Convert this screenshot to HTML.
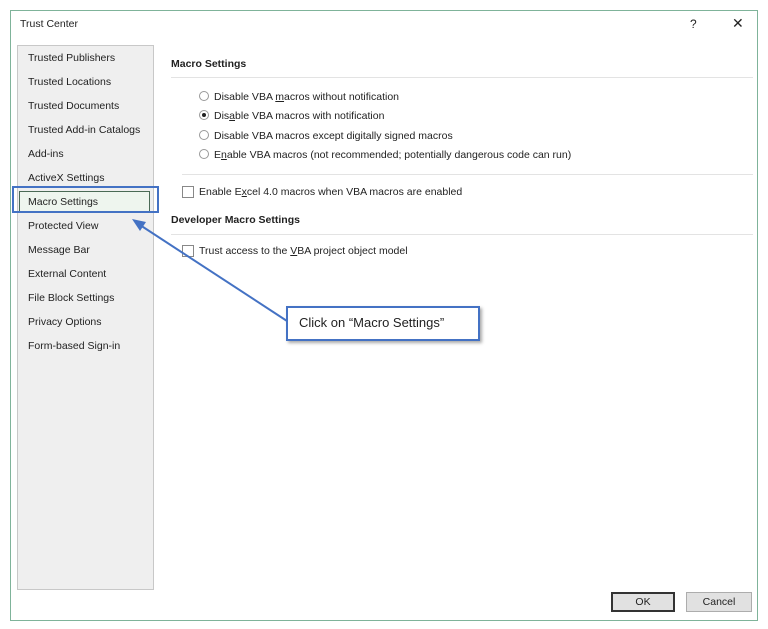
<!DOCTYPE html>
<html><head><style>
body{margin:0;width:768px;height:629px;background:#fff;font-family:"Liberation Sans",sans-serif;font-size:10.5px;color:#222;position:relative;overflow:hidden}
.a{position:absolute;white-space:nowrap}
.side{position:absolute;left:17px;top:45px;width:135px;height:543px;background:#efefef;border:1px solid #c8c8c8}
.it{position:absolute;left:10px}
.rad{position:absolute;width:8px;height:8px;border:1px solid #999;border-radius:50%;background:#fff}
.chk{position:absolute;width:10px;height:10px;border:1px solid #888;background:#fff}
.btn{position:absolute;height:18px;border:1px solid #adadad;background:#e1e1e1;text-align:center;line-height:18px}
.h{font-weight:bold}
.ln{position:absolute;height:1px;background:#e3e3e3}
</style></head><body>
<div style="position:absolute;left:10px;top:10px;width:746px;height:609px;border:1px solid #7fb39a"></div>
<div class="a" style="left:20px;top:18px">Trust Center</div>
<div class="a" style="left:690px;top:17px;font-size:12px">?</div>
<div class="a" style="left:732px;top:15px;font-size:14px">✕</div>
<div class="side">
<div class="it a" style="top:6px">Trusted Publishers</div>
<div class="it a" style="top:30px">Trusted Locations</div>
<div class="it a" style="top:54px">Trusted Documents</div>
<div class="it a" style="top:78px">Trusted Add-in Catalogs</div>
<div class="it a" style="top:102px">Add-ins</div>
<div class="it a" style="top:126px">ActiveX Settings</div>
<div class="a" style="left:1px;top:145px;width:129px;height:20px;background:#eef5ee;border:1px solid #4a6a55"></div>
<div class="it a" style="top:150px">Macro Settings</div>
<div class="it a" style="top:174px">Protected View</div>
<div class="it a" style="top:198px">Message Bar</div>
<div class="it a" style="top:222px">External Content</div>
<div class="it a" style="top:246px">File Block Settings</div>
<div class="it a" style="top:270px">Privacy Options</div>
<div class="it a" style="top:294px">Form-based Sign-in</div>
</div>
<div style="position:absolute;left:12px;top:186px;width:147px;height:27px;border:2px solid #4472c4;box-sizing:border-box"></div>
<div class="a h" style="left:171px;top:58px">Macro Settings</div>
<div class="ln" style="left:171px;top:77px;width:582px"></div>
<div class="rad" style="left:199px;top:91px"></div><div class="a" style="left:214px;top:91px">Disable VBA <u>m</u>acros without notification</div>
<div class="rad" style="left:199px;top:110px"><div style="position:absolute;left:2px;top:2px;width:4px;height:4px;border-radius:50%;background:#222"></div></div><div class="a" style="left:214px;top:110px">Dis<u>a</u>ble VBA macros with notification</div>
<div class="rad" style="left:199px;top:130px"></div><div class="a" style="left:214px;top:130px">Disable VBA macros except digitally signed macros</div>
<div class="rad" style="left:199px;top:149px"></div><div class="a" style="left:214px;top:149px">E<u>n</u>able VBA macros (not recommended; potentially dangerous code can run)</div>
<div class="ln" style="left:182px;top:174px;width:571px"></div>
<div class="chk" style="left:182px;top:186px"></div><div class="a" style="left:199px;top:186px">Enable E<u>x</u>cel 4.0 macros when VBA macros are enabled</div>
<div class="a h" style="left:171px;top:214px">Developer Macro Settings</div>
<div class="ln" style="left:171px;top:234px;width:582px"></div>
<div class="chk" style="left:182px;top:245px"></div><div class="a" style="left:199px;top:245px">Trust access to the <u>V</u>BA project object model</div>
<svg style="position:absolute;left:0;top:0" width="768" height="629"><line x1="287" y1="321" x2="140" y2="225" stroke="#4472c4" stroke-width="2"/><polygon points="132,219 146,222 140,231" fill="#4472c4"/></svg>
<div style="position:absolute;left:286px;top:306px;width:194px;height:35px;border:2px solid #4472c4;box-sizing:border-box;background:#fff;box-shadow:2px 2px 3px #aaa"></div>
<div class="a" style="left:299px;top:315px;font-size:13px">Click on “Macro Settings”</div>
<div class="btn" style="left:611px;top:592px;width:60px;border:2px solid #333;height:16px;line-height:16px">OK</div>
<div class="btn" style="left:686px;top:592px;width:64px">Cancel</div>
</body></html>
